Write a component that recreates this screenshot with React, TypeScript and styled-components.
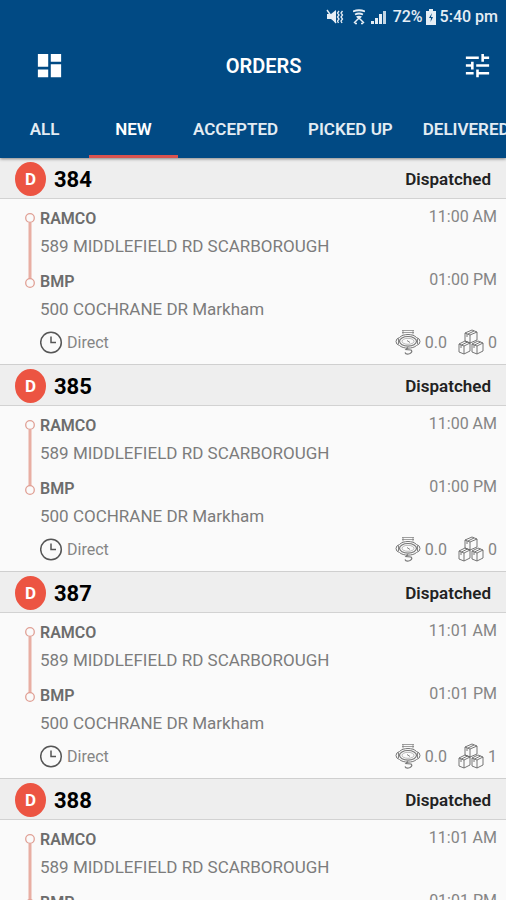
import React from "react";
import styled, { createGlobalStyle } from "styled-components";
import { MdDashboard, MdTune } from "react-icons/md";

const GlobalStyle = createGlobalStyle`
  *, *::before, *::after { box-sizing: border-box; }
  body {
    margin: 0;
    background: #fafafa;
    font-family: Roboto, "Liberation Sans", sans-serif;
  }
  h1, h2, p, ol, ul { margin: 0; padding: 0; list-style: none; }
  button { border: 0; padding: 0; background: none; font: inherit; color: inherit; cursor: pointer; }
`;

const Screen = styled.div`
  display: flex;
  flex-direction: column;
  height: 100vh;
  overflow: hidden;
`;

const TopBar = styled.header`
  position: relative;
  flex: none;
  background: #014a84;
  color: #fff;
  box-shadow: 0 1px 3px rgba(0, 0, 0, 0.45);
`;

const StatusBar = styled.div`
  display: flex;
  align-items: center;
  justify-content: flex-end;
  height: 33px;
  padding-right: 8px;
  font-size: 16px;
  font-weight: 500;
  color: #e6eef5;
`;

const StatusIcon = styled.svg<{ $gap: number }>`
  flex: none;
  margin-right: ${(p) => p.$gap}px;
`;

const Percent = styled.span`
  margin-right: 3px;
`;

const Toolbar = styled.div`
  display: flex;
  align-items: center;
  height: 65px;
  padding: 0 13px 0 34px;
`;

const IconButton = styled.button`
  display: flex;
  width: 31px;
  height: 31px;
`;

const Title = styled.h1`
  flex: 1;
  text-align: center;
  font-size: 20px;
  font-weight: 600;
`;

const Tabs = styled.nav`
  display: flex;
  height: 60px;
  overflow: hidden;
`;

const Tab = styled.button<{ $active?: boolean }>`
  flex: none;
  min-width: 89px;
  padding: 4px 15px 0;
  border-bottom: 3px solid ${(p) => (p.$active ? "#d9534f" : "transparent")};
  font-size: 17px;
  font-weight: 600;
  color: ${(p) => (p.$active ? "#fff" : "#e3ecf3")};
`;

const OrderList = styled.ul`
  flex: 1;
  min-height: 0;
  overflow-y: auto;
  scrollbar-width: none;
`;

const OrderHeader = styled.div`
  display: flex;
  align-items: center;
  height: 41px;
  padding: 2px 15px 0;
  background: #eee;
  border-bottom: 1px solid #d2d2d2;
`;

const Badge = styled.span`
  display: flex;
  align-items: center;
  justify-content: center;
  width: 31px;
  height: 34px;
  margin-right: 8px;
  border-radius: 50%;
  background: #ec5442;
  color: #fff;
  font-size: 17px;
  font-weight: 700;
`;

const OrderNumber = styled.h2`
  flex: 1;
  font-size: 22px;
  font-weight: 700;
  color: #000;
`;

const OrderStatus = styled.span`
  font-size: 17px;
  font-weight: 600;
  color: #222;
`;

const OrderBody = styled.div`
  display: flex;
  gap: 5px;
  padding: 6px 9px 8px 25px;
  border-bottom: 1px solid #cfcfcf;
`;

const Rail = styled.svg`
  flex: none;
  margin-top: 8px;
`;

const Details = styled.div`
  flex: 1;
  min-width: 0;
`;

const Stops = styled.ol`
  display: flex;
  flex-direction: column;
  gap: 9px;
`;

const StopTop = styled.div`
  display: flex;
  justify-content: space-between;
  line-height: 28px;
`;

const StopName = styled.span`
  font-size: 16px;
  font-weight: 600;
  color: #6c6c6c;
`;

const StopTime = styled.time`
  font-size: 16px;
  line-height: 24px;
  color: #858585;
`;

const Address = styled.p`
  font-size: 17px;
  line-height: 26px;
  color: #7c7c7c;
  white-space: nowrap;
`;

const Footer = styled.div`
  display: flex;
  align-items: center;
  height: 28px;
  margin-top: 6px;
  font-size: 16px;
  color: #858585;
`;

const Service = styled.span`
  display: flex;
  flex: 1;
  align-items: center;
  gap: 4px;
`;

const Metric = styled.span`
  display: flex;
  align-items: center;
  gap: 4px;
  margin-left: 11px;
`;

const MuteIcon = () => (
  <StatusIcon $gap={9} width="18" height="18" viewBox="0 0 18 18" aria-label="Vibrate">
    <path d="M1 6h4l5-4v13l-5-4H1z" fill="currentColor" />
    <path d="M1 2l9 13" stroke="currentColor" strokeWidth="1.400" />
    <path d="M13 3l-1.500 2 1.500 2-1.500 2 1.500 2-1.500 2 1 2M16.500 3L15 5l1.500 2L15 9l1.500 2-1.500 2 1 2" fill="none" stroke="currentColor" strokeWidth="1.300" />
  </StatusIcon>
);

const WifiIcon = () => (
  <StatusIcon $gap={6} width="12" height="16" viewBox="0 0 12 16" aria-label="Wi-Fi">
    <path d="M0 2.500Q6 0 12 2.500M2 5.500Q6 3.500 10 5.500" fill="none" stroke="currentColor" strokeWidth="1.800" />
    <path d="M3 7.500q3-1.500 6 0L6 11z" fill="currentColor" />
    <path d="M1 14l4-4M11 14l-4-4M2 14.500h2M8 14.500h2" stroke="currentColor" strokeWidth="1.500" />
  </StatusIcon>
);

const SignalIcon = () => (
  <StatusIcon $gap={6} width="16" height="16" viewBox="0 0 16 16" aria-label="Signal">
    <path d="M0 12h3v3H0zM4 9h3v6H4zM8 5h3v10H8z" fill="currentColor" />
    <path d="M12 2h3v13h-3z" fill="currentColor" fillOpacity=".85" />
  </StatusIcon>
);

const BatteryIcon = () => (
  <StatusIcon $gap={4} width="10" height="16" viewBox="0 0 10 16" aria-label="Battery charging">
    <path d="M3 0h4v2h3v14H0V2h3z" fill="currentColor" />
    <path d="M6 4L3 9h2l-.5 4L7 8H5z" fill="#014a84" />
  </StatusIcon>
);

const ClockIcon = () => (
  <svg width="23" height="23" viewBox="0 0 23 23" fill="none" stroke="#555" aria-hidden="true">
    <circle cx="11" cy="11.500" r="10.300" strokeWidth="1.500" />
    <path d="M11 5.500v6H16" strokeWidth="1.500" />
  </svg>
);

const ScaleIcon = () => (
  <svg width="26" height="26" viewBox="0 0 26 26" fill="none" stroke="#777" aria-label="Weight">
    <path d="M7 1.500h12M7 3.500h12M8 1.500v4M18 1.500v4" strokeWidth=".7" />
    <path d="M4.500 8.500C8 4.500 18 4.500 21.500 8.500Q25 9.500 25 12.500T21.500 16.500C18 20 8 20 4.500 16.500Q1 15.500 1 12.500T4.500 8.500z" />
    <ellipse cx="13" cy="12.300" rx="8.500" ry="4.800" strokeWidth="1.200" />
    <ellipse cx="13" cy="12.300" rx="6" ry="3" strokeWidth=".5" />
    <path d="M3.500 9.500v5.500M22.500 9.500v5.500M12 11.500l3 2" strokeWidth=".9" />
    <path d="M13 18.500l-2 2 5 .5q2 2-1 3.500-4 1.500-5-1" strokeWidth="1.200" />
  </svg>
);

const BoxesIcon = () => (
  <svg width="26" height="26" viewBox="0 0 26 26" fill="none" stroke="#666" strokeLinejoin="round" aria-label="Packages">
    <path d="M7 4l7-3 5 2v8l-7 3-5-2zM7 4l5 2 7-3M12 6v8M10 5l6-3M9 5v3" strokeWidth=".9" />
    <path d="M1 15l6-3 5 2v8l-6 3-5-2zM1 15l5 2 6-3M6 17v8M3.500 16l6-3M3 16v3" strokeWidth=".9" />
    <path d="M14 15l6-3 5 2v8l-6 3-5-2zM14 15l5 2 6-3M19 17v8M16.500 16l6-3M16 16v3" strokeWidth=".9" />
  </svg>
);

const tabs = ["ALL", "NEW", "ACCEPTED", "PICKED UP", "DELIVERED"];

interface Order {
  id: number;
  pickup: string;
  dropoff: string;
  boxes: number;
}

const orders: Order[] = [
  { id: 384, pickup: "11:00 AM", dropoff: "01:00 PM", boxes: 0 },
  { id: 385, pickup: "11:00 AM", dropoff: "01:00 PM", boxes: 0 },
  { id: 387, pickup: "11:01 AM", dropoff: "01:01 PM", boxes: 1 },
  { id: 388, pickup: "11:01 AM", dropoff: "01:01 PM", boxes: 1 },
];

const Stop = ({ name, time, address }: { name: string; time: string; address: string }) => (
  <li>
    <StopTop>
      <StopName>{name}</StopName>
      <StopTime>{time}</StopTime>
    </StopTop>
    <Address>{address}</Address>
  </li>
);

const OrderItem = ({ order }: { order: Order }) => (
  <li>
    <OrderHeader>
      <Badge>D</Badge>
      <OrderNumber>{order.id}</OrderNumber>
      <OrderStatus>Dispatched</OrderStatus>
    </OrderHeader>
    <OrderBody>
      <Rail width="10" height="76" viewBox="0 0 10 76" fill="none" stroke="#e0a095" aria-hidden="true">
        <path d="M5 10v56" stroke="#e8aea3" strokeWidth="3" />
        <circle cx="5" cy="5" r="4.300" strokeWidth="1.300" />
        <circle cx="5" cy="70" r="4.300" strokeWidth="1.300" />
      </Rail>
      <Details>
        <Stops>
          <Stop name="RAMCO" time={order.pickup} address="589 MIDDLEFIELD RD SCARBOROUGH" />
          <Stop name="BMP" time={order.dropoff} address="500 COCHRANE DR Markham" />
        </Stops>
        <Footer>
          <Service>
            <ClockIcon />
            Direct
          </Service>
          <Metric>
            <ScaleIcon />
            0.0
          </Metric>
          <Metric>
            <BoxesIcon />
            {order.boxes}
          </Metric>
        </Footer>
      </Details>
    </OrderBody>
  </li>
);

export default function App() {
  return (
    <Screen>
      <GlobalStyle />
      <TopBar>
        <StatusBar>
          <MuteIcon />
          <WifiIcon />
          <SignalIcon />
          <Percent>72%</Percent>
          <BatteryIcon />
          <span>5:40 pm</span>
        </StatusBar>
        <Toolbar>
          <IconButton aria-label="Dashboard">
            <MdDashboard size={31} />
          </IconButton>
          <Title>ORDERS</Title>
          <IconButton aria-label="Filter">
            <MdTune size={31} />
          </IconButton>
        </Toolbar>
        <Tabs>
          {tabs.map((tab) => (
            <Tab key={tab} $active={tab === "NEW"}>
              {tab}
            </Tab>
          ))}
        </Tabs>
      </TopBar>
      <OrderList>
        {orders.map((order) => (
          <OrderItem key={order.id} order={order} />
        ))}
      </OrderList>
    </Screen>
  );
}
